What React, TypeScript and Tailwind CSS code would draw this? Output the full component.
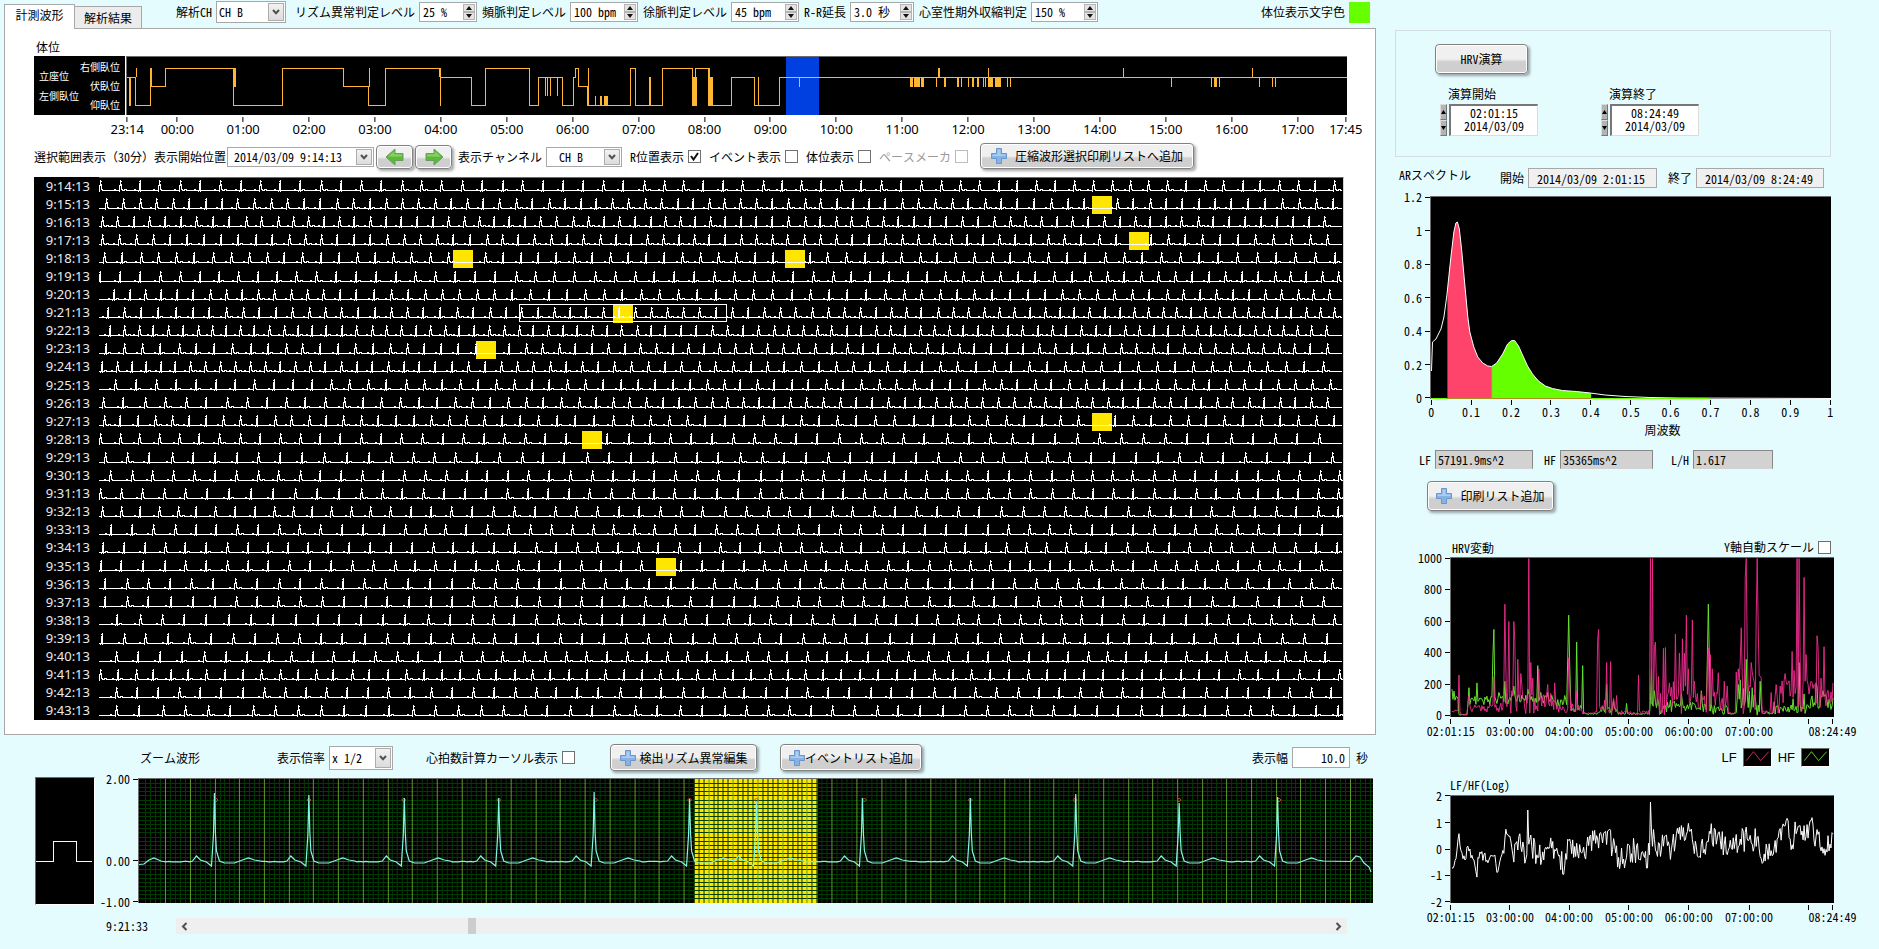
import React from 'react';

const MONO = 'font-["Noto_Sans_Mono_CJK_JP","Noto_Sans_CJK_JP",monospace]';
const SANS = 'font-["Noto_Sans",sans-serif]';

function rng(seed: number) {
  let s = seed;
  return () => {
    s = (s * 1664525 + 1013904223) % 4294967296;
    return s / 4294967296;
  };
}

/* ---------- shared controls ---------- */

function Chevron() {
  return (
    <span className="pointer-events-none absolute inset-y-px right-px flex w-4 items-center justify-center border border-[#adadad] bg-gradient-to-b from-[#f2f2f2] to-[#dcdcdc]">
      <svg width="8" height="6" viewBox="0 0 8 6" fill="none" stroke="#505050" strokeWidth="2">
        <path d="M1 1l3 3.2L7 1" />
      </svg>
    </span>
  );
}

function Drop({ id, value, className }: { id: string; value: string; className: string }) {
  return (
    <span className={`relative block border border-[#a8a8a8] bg-white ${className}`}>
      <select id={id} defaultValue={value} className="block h-full w-full appearance-none bg-transparent pr-4 outline-none">
        <option>{value}</option>
      </select>
      <Chevron />
    </span>
  );
}

function Arrows() {
  return (
    <span className="flex w-3 flex-col">
      <button type="button" aria-label="増やす" className="flex flex-1 items-center justify-center border border-[#b4b4b4] bg-[#e4e4e4]">
        <svg width="6" height="4" viewBox="0 0 6 4"><path d="M0 4h6L3 0z" fill="#111" /></svg>
      </button>
      <button type="button" aria-label="減らす" className="flex flex-1 items-center justify-center border border-[#b4b4b4] bg-[#e4e4e4]">
        <svg width="6" height="4" viewBox="0 0 6 4"><path d="M0 0h6L3 4z" fill="#111" /></svg>
      </button>
    </span>
  );
}

function Spin({ id, label, value, className }: { id: string; label: string; value: string; className: string }) {
  return (
    <div className="flex items-center gap-1">
      <label htmlFor={id}>{label}</label>
      <span className={`flex h-5 border border-[#a8a8a8] bg-white p-px ${className}`}>
        <input id={id} defaultValue={value} className="min-w-0 flex-1 bg-transparent pl-0.5 outline-none" />
        <Arrows />
      </span>
    </div>
  );
}

function Check({ id, label, checked, muted, className }: { id: string; label: string; checked?: boolean; muted?: boolean; className?: string }) {
  return (
    <span className={`flex items-center gap-1 ${muted ? 'text-[#9a9a9a]' : ''} ${className ?? ''}`}>
      <label htmlFor={id}>{label}</label>
      <span className="relative flex">
        <input
          id={id}
          type="checkbox"
          defaultChecked={checked}
          disabled={muted}
          className={`peer h-[13px] w-[13px] appearance-none border bg-white ${muted ? 'border-[#bcbcbc]' : 'border-[#707070]'}`}
        />
        <svg className="pointer-events-none absolute inset-0 hidden peer-checked:block" width="13" height="13" viewBox="0 0 13 13" fill="none" stroke="#111" strokeWidth="2">
          <path d="M3 6l2.5 3.5L10 3" />
        </svg>
      </span>
    </span>
  );
}

const BTN =
  'flex items-center justify-center rounded-[4px] border border-[#828282] bg-gradient-to-b from-[#f0f0f0] from-50% to-[#cfcfcf] to-60% shadow-[inset_0_0_0_1px_#ffffff,2px_2px_3px_rgba(0,0,0,0.35)]';

function Plus() {
  return (
    <svg width="16" height="16" viewBox="0 0 16 16" className="shrink-0">
      <path d="M5.5 .5h5v5h5v5h-5v5h-5v-5h-5v-5h5z" fill="#86b2e4" stroke="#6a96cc" />
      <path d="M6.500 1.500h3v5H14.500v1.500H1.500V6.500h5z" fill="#a9cdf3" />
    </svg>
  );
}

function GreenArrow({ flip }: { flip?: boolean }) {
  return (
    <svg width="20" height="18" viewBox="0 0 20 18" className={flip ? '-scale-x-100' : ''}>
      <path d="M1 9L10 1v4.500h8v7h-8V17z" fill="#5cb83a" stroke="#6a9c60" />
      <path d="M3 8.800L9.200 3.200v3H17v2.300z" fill="#86d060" />
    </svg>
  );
}

/* ---------- axes ---------- */

type Tick = [number, string];

function XAxis({ ticks, className }: { ticks: Tick[]; className: string }) {
  return (
    <div className={`relative h-[26px] ${className}`}>
      {ticks.map(([p, t], i) => (
        <span key={i} className="absolute top-0 flex -translate-x-1/2 flex-col items-center" style={{ left: `${p}%` }}>
          <i className="h-[5px] w-px bg-black" />
          <span className="whitespace-nowrap leading-[14px]">{t}</span>
        </span>
      ))}
    </div>
  );
}

function YAxis({ labels, className }: { labels: Tick[]; className: string }) {
  return (
    <div className={`relative ${className}`}>
      {labels.map(([p, t]) => (
        <span key={t} className="absolute right-0 flex -translate-y-1/2 items-center gap-[3px] leading-4" style={{ top: `${p}%` }}>
          {t}
          <i className="h-px w-[5px] bg-black" />
        </span>
      ))}
    </div>
  );
}

const PLOT = 'block w-full bg-black border-t border-l border-[#6b6b6b] border-b-white border-r-white';

/* ---------- posture timeline ---------- */

const HI = 11.5, ST = 20.5, PR = 30.5, LE = 39.5, SU = 49.5;

const postureSteps: [number, number][] = [
  [127, ST], [135, SU], [150, HI], [150.5, PR], [165, HI], [233, SU], [282, HI], [343, PR], [368, SU], [385, HI],
  [439, ST], [471, SU], [485, HI], [529, SU], [538, ST], [562, SU], [573, ST], [575, HI], [578, PR], [587, SU],
  [630, HI], [635, SU], [662, HI], [692, SU], [695, HI], [709, SU], [731, ST], [754, SU], [779, ST], [1347, ST],
];

const postureBars: [number, number, number, number][] = [
  [128, ST, SU, 2], [135, HI, ST, 1], [233, HI, PR, 2], [368, HI, PR, 1], [439, HI, SU, 1],
  [544, ST, LE, 1], [546, ST, LE, 1], [549, ST, LE, 1], [556, ST, LE, 1], [587, HI, SU, 1],
  [594, LE, SU, 1], [599, LE, SU, 2], [603, LE, SU, 4], [648, ST, SU, 2], [692, ST, SU, 4], [707, HI, SU, 2], [709, ST, SU, 3],
  [758, ST, SU, 1], [799, ST, PR, 1], [910, ST, PR, 3], [914, ST, PR, 6], [921, ST, PR, 3], [936, ST, PR, 1], [944, ST, PR, 2],
  [957, ST, PR, 2], [961, ST, PR, 1], [968, ST, PR, 1], [972, ST, PR, 2], [977, ST, PR, 2], [983, ST, PR, 1], [985, ST, PR, 1],
  [988, ST, PR, 5], [995, ST, PR, 6], [1007, ST, PR, 1], [1010, ST, PR, 1], [1171, ST, PR, 1], [1211, ST, PR, 1],
  [1214, ST, PR, 3], [1219, ST, PR, 1], [1259, ST, PR, 1], [1272, ST, PR, 1], [1275, ST, PR, 1],
  [938, HI, ST, 2], [988, HI, ST, 1], [1123, HI, ST, 1], [1252, HI, ST, 1],
];

function Posture() {
  const d = postureSteps.map(([x, y], i) => (i ? `H${x - 126}V${y}` : `M0 ${y}`)).join('');
  return (
    <svg viewBox="0 0 1221 59" preserveAspectRatio="none" className={`h-[59px] ${PLOT}`} shapeRendering="crispEdges" role="img" aria-label="体位">
      <rect x="660" y="0" width="33" height="59" fill="#0040e0" />
      <path d={d} fill="none" stroke="#ffb733" />
      {postureBars.map(([x, a, b, w], i) => (
        <rect key={i} x={x - 126} y={a} width={w} height={b - a} fill="#ffb733" />
      ))}
    </svg>
  );
}

const hours: Tick[] = [[0.1, '23:14'], [4.2, '00:00']];
for (let h = 1; h <= 17; h++) hours.push([4.2 + h * 5.397, `${String(h).padStart(2, '0')}:00`]);
hours.push([99.9, '17:45']);

/* ---------- compressed ECG ---------- */

// [first beat, interval at the left, in the middle, at the right]
const rows: [number, number, number, number][] = [
  [1, 20, 20, 18], [7, 16.5, 16, 17], [3, 16, 15.5, 16], [3, 17, 15.5, 18], [5, 18, 18, 19.5], [1, 19.5, 20, 15.5],
  [15, 15.5, 19, 16], [9, 17, 16, 14], [11, 14.5, 15, 14.5], [7, 18, 16, 16], [3, 14.5, 17, 19], [16, 20, 17, 17.5],
  [4, 21, 16, 15.5], [5, 16.5, 19, 18], [1, 20, 21, 22.5], [6, 22, 22, 22], [11, 21, 21, 20.5], [1, 21.5, 21, 20.5],
  [3, 19, 21.5, 21], [12, 21, 21, 21], [4, 20.5, 20.5, 21], [2, 21, 20.5, 21], [6, 22, 21.5, 21.5], [6, 22, 21.5, 22],
  [18, 22.5, 21, 21], [3, 21.5, 22, 22], [17, 22.5, 20, 20], [1, 18, 18, 20], [17, 21, 21, 21], [17, 23, 22, 22],
];

const flags: [number, number][] = [[1, 993], [3, 1030], [4, 354], [4, 686], [7, 514], [9, 377], [13, 993], [14, 483], [21, 557]];

const PITCH = 18.1;

function ecgRow(i: number) {
  const [start, a, m, z] = rows[i];
  const r = rng(i * 7919 + 13);
  const b = Math.round(i * PITCH + 12) + 0.5;
  const hits = flags.filter(([row]) => row === i).map(([, x]) => x);
  let d = `M0 ${b}`;
  let x = start;
  while (x < 1241) {
    const inside = hits.some((h) => x > h + 2 && x < h + 20) && i !== 7;
    if (!inside) {
      const p = Math.round(x) + 0.5;
      if (p > 8) d += `H${p - 6}v-1h1v1`;
      d += r() < 0.55
        ? `H${p - 1}v1V${b - 5}h1V${b - 11}v2h-1h2h-1v3h1v5h1V${b}`
        : `H${p - 2}v1v-1h1V${b - 7}h1V${b - 11}v2h-2h2V${b + 1}v-1`;
      if (r() < 0.4) d += `h2v-1h2v1`;
    }
    const t = x / 1243;
    const step = t < 0.5 ? a + (m - a) * t * 2 : m + (z - m) * (t - 0.5) * 2;
    x += step + (r() - 0.5) * 1.6;
  }
  return d + `H1243`;
}

function Compressed() {
  const times = rows.map((_, i) => `9:${14 + i}:13`);
  return (
    <div className="flex bg-black">
      <ol className={`flex w-[65px] shrink-0 flex-col pr-[9px] text-right text-[13px] text-[#ececec] ${SANS}`}>
        {times.map((t) => (
          <li key={t} className="flex flex-1 items-center justify-end leading-none">{t}</li>
        ))}
      </ol>
      <div className="min-w-0 flex-1">
        <svg viewBox="0 0 1244 542" preserveAspectRatio="none" className="block h-[543px] w-full border-t border-r border-[#6b6b6b] border-r-[#d4d4d4]" shapeRendering="crispEdges" role="img" aria-label="圧縮波形">
          {flags.map(([row, x]) => (
            <rect key={`${row}-${x}`} x={x} y={Math.round(row * PITCH)} width="20" height="18" fill="#ffe600" />
          ))}
          {rows.map((_, i) => (
            <path key={i} d={ecgRow(i)} fill="none" stroke="#fff" />
          ))}
          <rect x="420.500" y="126.500" width="207" height="17" fill="none" stroke="#fff" />
        </svg>
      </div>
    </div>
  );
}

/* ---------- zoomed ECG ---------- */

const beats: [number, number, number][] = [
  [75.5, 14, 77], [170, 16, 170], [265.5, 19, 265], [360, 19, 360], [455.5, 13, 457], [551, 20, 551], [618, 22, 618],
  [724, 19, 726], [832, 19, 832], [937.500, 15, 937], [1041, 24, 1041], [1139.5, 18, 1141],
];

function zoomPath() {
  const y0 = 82;
  const r = rng(5);
  const pts: string[] = ['M0 85.500', 'L5 85', 'L10 81', 'L15 79', 'L22 82'];
  beats.forEach(([x, top], i) => {
    const prev = i ? beats[i - 1][0] + 48 : 24;
    for (let q = prev; q < x - 24; q += 3) pts.push(`L${q} ${y0 + 0.4 + Math.round(r() * 1.4) * 0.5}`);
    pts.push(`L${x - 22} ${y0}`, `L${x - 18} ${y0 - 5}`, `L${x - 14} ${y0 - 1}`, `L${x - 8} ${y0 + 1}`, `L${x - 3} ${y0 + 5}`);
    pts.push(`L${x - 1} ${y0 - 26}`, `L${x} ${top}`, `L${x + 1} ${y0 - 28}`, `L${x + 2} ${y0 - 10}`, `L${x + 5} ${y0}`, `L${x + 10} ${y0 + 2}`, `L${x + 20} ${y0 + 2}`);
    pts.push(`L${x + 28} ${y0 - 1}`, `L${x + 34} ${y0 - 3}`, `L${x + 40} ${y0 - 1}`, `L${x + 46} ${y0}`);
  });
  pts.push('L1213 82.500', 'L1218 77', 'L1222 78', 'L1226 84', 'L1231 88', 'L1233 93');
  return pts.join('');
}

function ZoomChart() {
  const minorX: string[] = [];
  const majorX: string[] = [];
  for (let i = 1; i < 250; i++) {
    const x = Math.round(1.500 + i * 4.940) + 0.5;
    if (i % 5) minorX.push(`M${x} 0V124`);
    else majorX.push(`M${x} 0V124`);
  }
  const minorY: string[] = [];
  for (let i = 1; i < 30; i++) minorY.push(`M0 ${Math.round(i * 4.110) + 0.5}H1235`);
  return (
    <svg viewBox="0 0 1235 124" preserveAspectRatio="none" className={`h-[125px] ${PLOT}`} role="img" aria-label="ズーム波形">
      <rect x="556" y="0" width="123" height="124" fill="#ffe600" />
      <g shapeRendering="crispEdges" fill="none">
        <path d={minorX.join('') + minorY.join('')} stroke="#003c00" />
        <path d="M0 82.500H1235" stroke="#0a6a0a" />
        <path d={majorX.join('')} stroke="#5c9c28" />
      </g>
      {beats.map(([x, , m]) => (
        <path key={x} d={`M${m - 2} 21l2-2l2 2l-2 2z`} fill="none" stroke="#d8402a" />
      ))}
      <path d={zoomPath()} fill="none" stroke="#84f4e4" strokeWidth="1.200" />
    </svg>
  );
}

/* ---------- AR spectrum ---------- */

const SPEC_CURVE: [number, number][] = [
  [0.5, 174], [1.5, 145], [5, 142], [10, 132], [13, 120], [16, 98], [20, 60], [23, 35], [25, 26], [26.5, 25], [28.500, 32], [31, 55],
  [34, 88], [37, 120], [39, 135], [43, 150], [47, 160], [52, 166], [57, 169], [61, 169.5], [66, 166], [72, 157], [77, 147],
  [81, 143.500], [84, 143.500], [88, 149], [92, 158], [97, 169], [102, 177], [108, 184], [115, 189], [122, 191.5], [132, 193.500],
  [146, 194.500], [160, 196], [175, 198], [195, 199.500], [220, 200.5], [250, 201], [402, 201.500],
];

function slice(a: number, b: number) {
  const at = (x: number) => {
    const i = SPEC_CURVE.findIndex(([px]) => px >= x);
    const [x1, y1] = SPEC_CURVE[i];
    const [x0, y0] = SPEC_CURVE[i - 1];
    return y0 + ((y1 - y0) * (x - x0)) / (x1 - x0);
  };
  const mid = SPEC_CURVE.filter(([x]) => x > a && x < b).map(([x, y]) => `L${x} ${y}`).join('');
  return `M${a} 202L${a} ${at(a)}${mid}L${b} ${at(b)}L${b} 202z`;
}

function Spectrum() {
  return (
    <svg viewBox="0 0 402 202" preserveAspectRatio="none" className={`h-[203px] ${PLOT}`} role="img" aria-label="ARスペクトル">
      <path d={slice(16.5, 61)} fill="#ff446c" />
      <path d={slice(61, 161)} fill="#66ff00" />
      <path d={'M' + SPEC_CURVE.map(([x, y]) => `${x} ${y}`).join('L')} fill="none" stroke="#fff" />
      <path d="M0 201.500H16M161 201.500H280" stroke="#66ff00" />
      <path d="M16 201.500H161" stroke="#a89020" />
      <path d="M61 170V202" stroke="#a8a040" />
    </svg>
  );
}

/* ---------- HRV trends ---------- */

// spikes as [x, value]; x runs 0..383
const lfSpikes: [number, number][] = [
  [8, 260], [18, 130], [43, 250], [54, 710], [55, 300], [58, 600], [63, 600], [64, 480], [67, 360], [70, 270], [78, 1000], [80, 340], [82, 240],
  [88, 300], [97, 200], [104, 210], [118, 370], [119, 200], [126, 160], [147, 480], [148, 550], [156, 340], [160, 345], [166, 130],
  [188, 260], [200, 1000], [202, 1000], [204, 440], [205, 470], [208, 250], [213, 430], [215, 435], [225, 520], [229, 400], [232, 490],
  [234, 400], [236, 640], [238, 300], [242, 610], [244, 220], [251, 150], [257, 300], [258, 430], [260, 390], [262, 300], [268, 275], [274, 220], [277, 190],
  [288, 300], [290, 350], [291, 560], [295, 880], [296, 1000], [297, 420], [301, 340], [302, 280], [306, 620], [307, 1000], [308, 560], [311, 240], [321, 150],
  [326, 200], [330, 190], [335, 270], [338, 210], [342, 410], [344, 290], [347, 1000], [349, 1000], [350, 400], [354, 880], [356, 390], [358, 200], [361, 220],
  [364, 200], [367, 510], [368, 440], [371, 240], [374, 440], [377, 150], [383, 210],
];
const hfSpikes: [number, number][] = [
  [1, 170], [18, 180], [26, 210], [42, 380], [43, 550], [48, 150], [54, 220], [63, 190], [77, 170], [87, 320], [90, 150], [97, 150], [114, 130], [117, 360], [118, 640], [119, 330],
  [126, 470], [132, 320], [156, 200], [163, 100], [176, 80], [201, 300], [204, 160], [220, 100], [231, 140], [251, 160], [257, 360], [258, 710], [259, 380],
  [288, 200], [290, 230], [296, 360], [302, 180], [310, 220], [324, 90], [343, 110], [349, 340], [354, 140], [366, 210], [367, 190], [373, 160],
];

function envelope(x: number, stops: [number, number][]) {
  let v = stops[0][1];
  for (const [s, val] of stops) if (x >= s) v = val;
  return v;
}

function series(seed: number, spikes: [number, number][], base: [number, number][], spread: [number, number][]) {
  const r = rng(seed);
  const map = new Map(spikes);
  let d = '';
  for (let x = 1; x <= 383; x++) {
    const n = envelope(x, base) + (r() - 0.5) * envelope(x, spread);
    const v = map.get(x) ?? Math.max(6, n);
    d += `${x === 1 ? 'M' : 'L'}${x} ${(158 - v * 0.1575).toFixed(1)}`;
  }
  return d;
}

const LF = series(
  21,
  lfSpikes,
  [[0, 40], [10, 10], [17, 55], [52, 110], [72, 80], [105, 50], [132, 20], [147, 60], [168, 20], [198, 80], [210, 110], [245, 80], [278, 20], [286, 150], [312, 25], [325, 120], [372, 90]],
  [[0, 40], [10, 6], [17, 60], [52, 200], [72, 140], [105, 70], [132, 16], [147, 120], [168, 30], [198, 220], [245, 150], [278, 20], [286, 280], [312, 25], [325, 220]],
);
const HF = series(
  9,
  hfSpikes,
  [[0, 130], [8, 8], [17, 100], [60, 110], [105, 85], [121, 50], [133, 15], [147, 40], [168, 15], [200, 90], [209, 40], [216, 60], [262, 40], [278, 15], [287, 120], [300, 60], [312, 20], [326, 45], [360, 90]],
  [[0, 60], [8, 4], [17, 60], [60, 60], [105, 50], [133, 12], [147, 40], [168, 12], [200, 80], [216, 70], [278, 12], [287, 150], [312, 20], [326, 60], [360, 100]],
);

const ratioKeys: [number, number][] = [
  [1, -0.7], [5, -0.35], [8, 0.6], [10, -0.05], [14, -0.4], [16, 0.1], [23, -0.4], [26, -1.05], [27, -0.3], [33, -0.2], [38, -0.4], [43, -0.25], [47, -0.85], [51, -0.2],
  [54, 0.4], [58, 0.5], [62, -0.2], [66, 0.3], [70, 0.1], [76, -0.2], [77, 1.5], [78, 0.2], [86, -0.2], [93, -0.4], [97, 0.1], [104, 0], [108, -0.25], [114, -0.6], [119, 0.4], [123, -0.3],
  [130, -0.1], [138, 0.15], [147, 0.4], [151, 0.5], [157, 0.7], [162, 0], [168, -0.3], [176, -0.3], [184, 0], [190, -0.4], [199, -0.2], [200, 1.8], [201, 0.7], [206, -0.1], [214, 0.5], [221, 0],
  [226, 0.6], [232, 0.5], [240, 0.7], [246, 0.1], [254, 0], [260, 0.6], [266, 0.2], [274, 0.2], [282, 0], [290, 0.4], [297, 0.4], [302, 0.2], [308, 0.5], [311, -0.35], [317, 0], [323, -0.2],
  [328, 0.45], [335, 0.9], [340, 0.4], [346, 0.6], [352, 0.7], [356, 0.5], [361, 1.1], [366, 0.5], [372, 0.1], [376, 0], [380, 0.2], [383, 0.6],
];

function ratioPath() {
  const r = rng(77);
  let d = '';
  let k = 0;
  for (let x = 1; x <= 383; x++) {
    while (k < ratioKeys.length - 2 && ratioKeys[k + 1][0] <= x) k++;
    const [x0, v0] = ratioKeys[k];
    const [x1, v1] = ratioKeys[k + 1];
    const exact = x === x0 || x === x1;
    const noise = exact ? 0 : (r() - 0.5) * (x < 50 ? 0.4 : 1);
    const v = v0 + ((v1 - v0) * (x - x0)) / (x1 - x0) + noise;
    d += `${x === 1 ? 'M' : 'L'}${x} ${(53.5 - v * 26.3).toFixed(1)}`;
  }
  return d;
}

const trendTicks: Tick[] = [[0.2, '02:01:15'], [15.6, '03:00:00'], [31, '04:00:00'], [46.6, '05:00:00'], [62.2, '06:00:00'], [77.9, '07:00:00'], [99.6, '08:24:49']];
const specTicks: Tick[] = ['0', '0.1', '0.2', '0.3', '0.4', '0.5', '0.6', '0.7', '0.8', '0.9', '1'].map((t, i) => [0.3 + i * 9.95, t]);

function ExtraTick() {
  return <i className="absolute top-0 left-[93.2%] h-[5px] w-px bg-black" />;
}

function Swatch({ color }: { color: string }) {
  return (
    <svg width="29" height="19" viewBox="0 0 29 19" className="border border-[#6b6b6b] border-r-white border-b-white bg-black">
      <path d="M2 13L10 3l8 10l9-10" fill="none" stroke={color} />
    </svg>
  );
}

function TimeSpin({ id, label, time, date }: { id: string; label: string; time: string; date: string }) {
  return (
    <div className="w-[98px]">
      <label htmlFor={id} className="block pb-px pl-2 leading-[18px]">{label}</label>
      <div className="flex gap-0.5">
        <span className="flex w-[7px] flex-col">
          <button type="button" aria-label="増やす" className="flex flex-1 items-center justify-center border border-[#777] border-t-[#ddd] border-l-[#ddd] bg-[#b4b4b4]">
            <svg width="5" height="4" viewBox="0 0 5 4" className="shrink-0"><path d="M0 4h5L2.500 0z" fill="#000" /></svg>
          </button>
          <button type="button" aria-label="減らす" className="flex flex-1 items-center justify-center border border-[#777] border-t-[#ddd] border-l-[#ddd] bg-[#b4b4b4]">
            <svg width="5" height="4" viewBox="0 0 5 4" className="shrink-0"><path d="M0 0h5L2.500 4z" fill="#000" /></svg>
          </button>
        </span>
        <textarea
          id={id}
          rows={2}
          defaultValue={`${time}\n${date}`}
          className="h-8 min-w-0 flex-1 resize-none overflow-hidden border-t-2 border-l-2 border-r border-b border-[#777] border-r-[#dcdcdc] border-b-[#dcdcdc] bg-white text-center leading-[13px] outline-none"
        />
      </div>
    </div>
  );
}

function Readout({ id, label, value, className, tone }: { id: string; label: string; value: string; className: string; tone: string }) {
  return (
    <span className="flex items-center gap-1">
      <label htmlFor={id}>{label}</label>
      <input id={id} readOnly defaultValue={value} className={`border outline-none ${tone} ${className}`} />
    </span>
  );
}

/* ---------- page ---------- */

export default function App() {
  return (
    <main className={`grid min-h-screen grid-cols-[minmax(0,1fr)_436px] content-start gap-x-[19px] bg-[#e5fcff] pr-12 pl-1 text-[12px] leading-4 text-black ${MONO}`}>
      <div className="min-w-0">
        <header className="flex h-7 items-center whitespace-nowrap">
          <nav role="tablist" className="flex items-end self-end">
            <button type="button" role="tab" aria-selected="true" className="relative -mb-px h-[25px] w-[71px] border border-b-0 border-[#a8a8a8] bg-white pb-1 text-[12px]">計測波形</button>
            <button type="button" role="tab" aria-selected="false" className="h-[22px] w-[67px] border border-b-0 border-l-0 border-[#a8a8a8] bg-[#ececec] text-[12px]">解析結果</button>
          </nav>
          <div className="flex min-w-0 flex-1 items-center gap-[5px] pb-1 pl-[34px]">
            <div className="flex items-center gap-1 pr-1">
              <label htmlFor="ch">解析CH</label>
              <Drop id="ch" value="CH B" className="h-[22px] w-[70px] pl-0.5" />
            </div>
            <Spin id="rhythm" label="リズム異常判定レベル" value="25 %" className="w-[58px]" />
            <Spin id="tachy" label="頻脈判定レベル" value="100 bpm" className="w-[68px]" />
            <Spin id="brady" label="徐脈判定レベル" value="45 bpm" className="w-[68px]" />
            <Spin id="rr" label="R-R延長" value="3.0 秒" className="w-16" />
            <Spin id="pvc" label="心室性期外収縮判定" value="150 %" className="w-[67px]" />
            <div className="ml-auto flex items-center gap-1 pr-1.5">
              <label htmlFor="color">体位表示文字色</label>
              <button id="color" type="button" className="h-[21px] w-[21px] bg-[#66ff00]" />
            </div>
          </div>
        </header>

        <section className="border border-[#a8a8a8] bg-white pr-7 pb-[14px] pl-[29px]">
          <h2 className="pt-2.5 pb-px pl-0.5">体位</h2>
          <div className="flex">
            <ul className="flex h-[59px] w-[91px] shrink-0 items-center justify-between whitespace-nowrap bg-black px-[5px] text-[10px] leading-none text-white">
              <li>
                <ul className="flex flex-col gap-2.5">
                  <li>立座位</li>
                  <li>左側臥位</li>
                </ul>
              </li>
              <li>
                <ul className="flex flex-col items-end gap-[9px]">
                  <li>右側臥位</li>
                  <li>伏臥位</li>
                  <li>仰臥位</li>
                </ul>
              </li>
            </ul>
            <div className="min-w-0 flex-1 pl-px">
              <Posture />
            </div>
          </div>
          <XAxis ticks={hours} className={`mt-0.5 ml-[92px] text-[13px] ${SANS}`} />

          <div className="flex items-center whitespace-nowrap">
            <label htmlFor="start">選択範囲表示（30分）表示開始位置</label>
            <Drop id="start" value="2014/03/09 9:14:13" className="ml-px h-5 w-[147px] pl-1.5" />
            <button type="button" aria-label="前へ" className={`ml-0.5 h-6 w-[37px] ${BTN}`}><GreenArrow /></button>
            <button type="button" aria-label="次へ" className={`ml-0.5 h-6 w-[37px] ${BTN}`}><GreenArrow flip /></button>
            <label htmlFor="disp" className="ml-1.5">表示チャンネル</label>
            <Drop id="disp" value="CH B" className="ml-1 h-5 w-[76px] pl-3" />
            <Check id="rpos" label="R位置表示" checked className="ml-2" />
            <Check id="ev" label="イベント表示" className="ml-2" />
            <Check id="pos" label="体位表示" className="ml-2" />
            <Check id="pace" label="ペースメーカ" muted className="ml-2" />
            <button type="button" className={`mb-px ml-3 h-[26px] gap-2 px-2.5 ${BTN}`}><Plus />圧縮波形選択印刷リストへ追加</button>
          </div>
          <div className="pt-[7px] pr-[3px]">
            <Compressed />
          </div>
        </section>

        <div className="flex h-[43px] items-center whitespace-nowrap pt-0.5 pl-[136px]">
          <h2 className="w-[137px]">ズーム波形</h2>
          <label htmlFor="mag">表示倍率</label>
          <Drop id="mag" value="x 1/2" className="ml-1 h-6 w-16 pl-0.5" />
          <Check id="cursor" label="心拍数計算カーソル表示" className="ml-[33px]" />
          <button type="button" className={`ml-[35px] h-[27px] w-[147px] gap-1 ${BTN}`}><Plus />検出リズム異常編集</button>
          <button type="button" className={`ml-[23px] h-[27px] w-[142px] ${BTN}`}><Plus />イベントリスト追加</button>
          <label htmlFor="span" className="ml-auto">表示幅</label>
          <input id="span" defaultValue="10.0" className="ml-1 h-[21px] w-[58px] border border-[#a8a8a8] bg-white pr-1 text-right outline-none" />
          <span className="mr-2 ml-1.5">秒</span>
        </div>

        <div className="flex pr-[3px] pl-[31px]">
          <svg viewBox="0 0 60 128" preserveAspectRatio="none" className="-mt-px h-32 w-[60px] shrink-0 border border-[#6b6b6b] border-r-white border-b-white bg-black" shapeRendering="crispEdges">
            <path d="M0 84.500H18.500V64.500H41.500V84.500H58" fill="none" stroke="#fff" />
          </svg>
          <YAxis className="h-[125px] w-[43px] shrink-0" labels={[[0.8, '2.00'], [66, '0.00'], [99, '-1.00']]} />
          <div className="min-w-0 flex-1">
            <ZoomChart />
          </div>
        </div>

        <div className="flex items-center pt-[13px] pr-[29px] pl-[102px]">
          <label htmlFor="scroll" className="w-[70px]">9:21:33</label>
          <div className="flex h-4 min-w-0 flex-1 items-center bg-[#efefef]">
            <button type="button" aria-label="左へ" className="flex w-[17px] justify-center">
              <svg width="7" height="9" viewBox="0 0 7 9" fill="none" stroke="#505050" strokeWidth="2"><path d="M5.500 1L2 4.500L5.500 8" /></svg>
            </button>
            <input
              id="scroll"
              type="range"
              min="0"
              max="1000"
              defaultValue="244"
              className="h-4 min-w-0 flex-1 appearance-none bg-transparent outline-none [&::-webkit-slider-thumb]:h-4 [&::-webkit-slider-thumb]:w-2 [&::-webkit-slider-thumb]:appearance-none [&::-webkit-slider-thumb]:bg-[#cdcdcd]"
            />
            <button type="button" aria-label="右へ" className="flex w-[17px] justify-center">
              <svg width="7" height="9" viewBox="0 0 7 9" fill="none" stroke="#505050" strokeWidth="2"><path d="M1.500 1L5 4.500L1.500 8" /></svg>
            </button>
          </div>
        </div>
      </div>

      <aside className="whitespace-nowrap pt-[30px]">
        <section className="h-[127px] border border-[#d4dde4] px-[39px] pt-[13px]">
          <button type="button" className={`h-[30px] w-[93px] ${BTN}`}>HRV演算</button>
          <div className="flex gap-[63px] pt-[11px] pl-[5px]">
            <TimeSpin id="t0" label="演算開始" time="02:01:15" date="2014/03/09" />
            <TimeSpin id="t1" label="演算終了" time="08:24:49" date="2014/03/09" />
          </div>
        </section>

        <div className="flex items-center pt-2.5 pl-1">
          <h2 className="w-[101px] pb-1.5">ARスペクトル</h2>
          <div className="flex gap-[11px]">
            <Readout id="r0" label="開始" value="2014/03/09 2:01:15" className="h-5 w-[129px] pl-2" tone="border-[#a8a8a8] bg-[#f0f0f0]" />
            <Readout id="r1" label="終了" value="2014/03/09 8:24:49" className="h-5 w-[128px] pl-2" tone="border-[#a8a8a8] bg-[#f0f0f0]" />
          </div>
        </div>

        <div className="flex pt-[7px]">
          <YAxis
            className="h-[203px] w-[35px] shrink-0"
            labels={[[0.5, '1.2'], [17, '1'], [33.700, '0.8'], [50, '0.6'], [66.700, '0.4'], [83.200, '0.2'], [99.500, '0']]}
          />
          <div className="min-w-0 flex-1">
            <Spectrum />
            <XAxis ticks={specTicks} className="mt-px" />
            <p className="-mt-1 pl-16 text-center">周波数</p>
          </div>
        </div>

        <div className="flex items-center pt-3 pl-6">
          <Readout id="lf" label="LF" value="57191.9ms^2" className="h-[19px] w-[98px] pl-0.5" tone="border-[#888] border-b-[#d2d2d2] bg-[#d2d2d2]" />
          <span className="w-[11px]" />
          <Readout id="hf" label="HF" value="35365ms^2" className="h-[19px] w-[93px] pl-0.5" tone="border-[#888] border-b-[#d2d2d2] bg-[#d2d2d2]" />
          <span className="w-[18px]" />
          <Readout id="lh" label="L/H" value="1.617" className="h-[19px] w-20 pl-0.5" tone="border-[#888] border-b-[#d2d2d2] bg-[#d2d2d2]" />
        </div>
        <button type="button" className={`mt-3 ml-8 h-[30px] w-[127px] gap-2 ${BTN}`}><Plus />印刷リスト追加</button>

        <section className="-mr-[3px] pt-[27px]">
          <div className="flex justify-between pr-[3px] pb-px pl-[57px]">
            <h2 className="pt-0.5">HRV変動</h2>
            <Check id="auto" label="Y軸自動スケール" />
          </div>
          <div className="flex">
            <YAxis className="h-[160px] w-[55px] shrink-0" labels={[[0.8, '1000'], [20, '800'], [40, '600'], [59.500, '400'], [79.500, '200'], [99, '0']]} />
            <div className="min-w-0 flex-1">
              <svg viewBox="0 0 384 159" preserveAspectRatio="none" className={`h-[160px] ${PLOT}`} role="img" aria-label="HRV変動">
                <path d={HF} fill="none" stroke="#66e030" />
                <path d={LF} fill="none" stroke="#f02c90" strokeOpacity="0.9" />
              </svg>
              <div className="relative">
                <XAxis ticks={trendTicks} className="mt-0.5" />
                <ExtraTick />
              </div>
            </div>
          </div>
          <div className="flex items-center justify-end gap-1.5 pt-[3px] pr-1 font-['Liberation_Sans',sans-serif] text-[13px]">
            <span>LF</span>
            <Swatch color="#d83070" />
            <span>HF</span>
            <Swatch color="#66e030" />
          </div>
          <h2 className="pt-[10px] pb-0.5 pl-[55px]">LF/HF(Log)</h2>
          <div className="flex">
            <YAxis className="h-[108px] w-[55px] shrink-0" labels={[[0.8, '2'], [25.500, '1'], [50, '0'], [74.500, '-1'], [99, '-2']]} />
            <div className="min-w-0 flex-1">
              <svg viewBox="0 0 384 107" preserveAspectRatio="none" className={`h-[108px] ${PLOT}`} role="img" aria-label="LF/HF(Log)">
                <path d={ratioPath()} fill="none" stroke="#fff" />
              </svg>
              <div className="relative">
                <XAxis ticks={trendTicks} className="mt-0.5" />
                <ExtraTick />
              </div>
            </div>
          </div>
        </section>
      </aside>
    </main>
  );
}
